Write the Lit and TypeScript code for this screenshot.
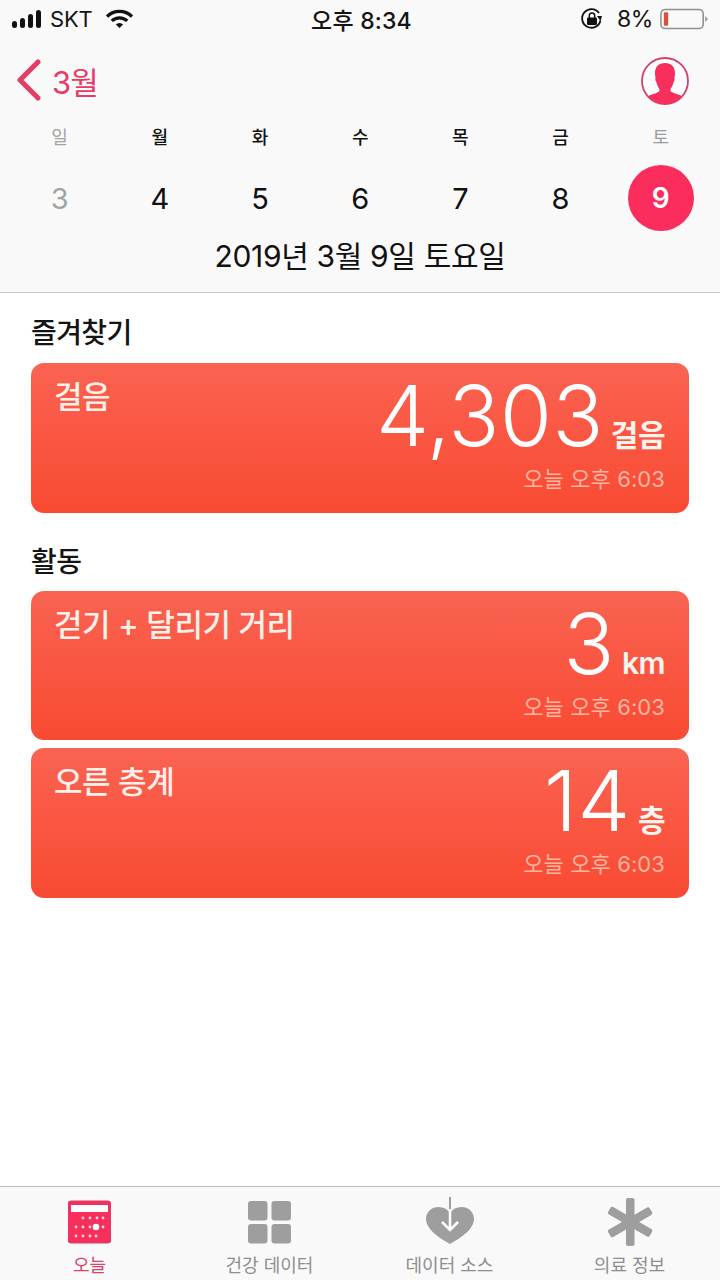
import { LitElement, html, css, svg } from "lit";
import { customElement } from "lit/decorators.js";

const days = [
  ["일", "3", "off"], ["월", "4", ""], ["화", "5", ""], ["수", "6", ""],
  ["목", "7", ""], ["금", "8", ""], ["토", "9", "sel"],
];

const dots = () => {
  const pts = [
    [15, 17], [22, 17], [29, 17], [35, 17],
    [8, 26], [15, 26], [22, 26], [35, 26],
    [8, 35], [15, 35], [22, 35], [28, 35],
  ];
  return pts.map(([x, y]) => svg`<circle cx=${x} cy=${y} r="1.4" fill="#fff" opacity=".8"/>`);
};

@customElement("app-root")
export class AppRoot extends LitElement {
  static styles = css`
    :host { display: block; width: 720px; height: 1280px; background: #fff; font-family: "Inter", "Noto Sans CJK KR", sans-serif; color: #111; }
    .page { display: flex; flex-direction: column; height: 1280px; overflow: hidden; }
    .head { background: #f9f9f9; height: 292px; border-bottom: 1px solid #c9c9c9; box-sizing: content-box; flex: none; }
    .status { height: 38px; display: grid; grid-template-columns: 1fr auto 1fr; align-items: center; padding: 0 12px; color: #141414; }
    .status .l, .status .r { display: flex; align-items: center; }
    .status .r { justify-content: flex-end; }
    .sig { display: flex; align-items: flex-end; gap: 3px; height: 18px; margin-right: 9px; }
    .sig i { width: 5px; background: #111; border-radius: 2.5px; display: block; }
    .sig i:nth-child(1) { height: 7px; } .sig i:nth-child(2) { height: 10px; } .sig i:nth-child(3) { height: 14px; } .sig i:nth-child(4) { height: 18px; }
    .carrier { font-weight: 400; font-size: 22px; letter-spacing: -.2px; margin-right: 13px; }
    .time { font-size: 23px; font-weight: 500; letter-spacing: .2px; margin-left: 3px; }
    .pct { font-size: 23px; margin: 0 7px 0 13px; letter-spacing: -.4px; }
    .nav { height: 86px; display: flex; align-items: center; justify-content: space-between; padding: 0 31px 0 16px; box-sizing: border-box; }
    .back { display: flex; align-items: center; gap: 10px; color: #e63d68; font-size: 31px; letter-spacing: -1px; margin-top: -2px; }
    .week { display: grid; grid-template-columns: repeat(7, 100.2px); padding-left: 9.5px; margin-top: 4px; }
    .day { display: flex; flex-direction: column; align-items: center; }
    .wd { font-size: 18px; line-height: 20px; font-weight: 500; }
    .num { width: 66px; height: 66px; margin-top: 17px; border-radius: 50%; display: flex; align-items: center; justify-content: center; font-size: 29px; font-weight: 400; }
    .off { color: #a3a3a3; }
    .off .wd { font-weight: 400; }
    .sel .wd { color: #9b9b9b; font-weight: 400; }
    .sel .num { background: #fb2d5c; color: #fff; font-size: 28px; font-weight: 600; }
    .date { text-align: center; font-size: 30px; line-height: 36px; margin-top: 7px; letter-spacing: -.35px; }
    .main { flex: 1; padding: 0 31px; }
    h2 { margin: 0; font-size: 28px; font-weight: 500; line-height: 36px; color: #141414; letter-spacing: -.6px; }
    .sec1 { margin-top: 22px; }
    .sec2 { margin-top: 31px; }
    .card { height: 149.5px; margin-top: 12px; border-radius: 13px; box-sizing: border-box; padding: 15px 24px 0 23px; color: #fff;
      background: linear-gradient(180deg, #fa6352 0%, #f94a32 100%); display: flex; justify-content: space-between; }
    .card + .card { margin-top: 8px; }
    .sec2 + .card { margin-top: 11px; }
    .title { font-size: 31px; font-weight: 500; line-height: 38px; letter-spacing: -.4px; color: #fff0ea; }
    .right { display: flex; flex-direction: column; align-items: flex-end; }
    .val { display: flex; align-items: baseline; height: 76px; }
    .big { font-size: 84px; font-weight: 280; line-height: 76px; letter-spacing: .5px; }
    .unit { font-size: 30px; font-weight: 600; margin-left: 7px; letter-spacing: -.5px; color: #fff3ee; }
    .when { font-size: 22px; line-height: 30px; color: #ffb5a0; margin-top: 10px; letter-spacing: .1px; }
    .tabs { height: 94px; flex: none; background: #f9f9f9; border-top: 1px solid #bdbdbd; display: grid; grid-template-columns: 179px 181px 179px 181px; box-sizing: border-box; }
    .tab { display: flex; flex-direction: column; align-items: center; color: #8e8e8e; font-size: 18px; }
    .tab svg { display: block; margin-top: 4px; height: 56px; }
    .tab span { line-height: 24px; margin-top: 7px; }
    .tab.on { color: #d9416a; }
  `;

  card(title: string, big: string, unit: string) {
    return html`<div class="card">
      <div class="title">${title}</div>
      <div class="right">
        <div class="val"><span class="big">${big}</span><span class="unit">${unit}</span></div>
        <div class="when">오늘 오후 6:03</div>
      </div>
    </div>`;
  }

  render() {
    return html`<div class="page">
      <div class="head">
        <div class="status">
          <div class="l">
            <div class="sig"><i></i><i></i><i></i><i></i></div>
            <span class="carrier">SKT</span>
            <svg width="27" height="20" viewBox="0 0 28 20"><path d="M1 7.5a18.5 18.5 0 0 1 26 0" fill="none" stroke="#111" stroke-width="3.4"/><path d="M6 12a11.5 11.5 0 0 1 16 0" fill="none" stroke="#111" stroke-width="3.4"/><path d="M10.2 15.6a5.4 5.4 0 0 1 7.6 0L14 19.4z" fill="#111"/></svg>
          </div>
          <div class="time">오후 8:34</div>
          <div class="r">
            <svg width="24" height="24" viewBox="0 0 24 24"><path d="M20.5 13.5A9.3 9.3 0 1 1 19 6" fill="none" stroke="#111" stroke-width="1.8"/><path d="M17 9l5 0-1.5 5z" fill="#111"/><rect x="7" y="10.5" width="10" height="7.5" rx="1.2" fill="#111"/><path d="M9.3 11V8.6a2.7 2.7 0 0 1 5.4 0V11" fill="none" stroke="#111" stroke-width="1.5"/></svg>
            <span class="pct">8%</span>
            <svg width="48" height="24" viewBox="0 0 50 24"><rect x="1" y="2" width="44" height="20" rx="4.5" fill="none" stroke="#8f8f8f" stroke-width="1.6"/><rect x="4" y="5" width="4.5" height="14" rx="1" fill="#d8503f"/><path d="M47 9l3 3-3 3z" fill="#999"/></svg>
          </div>
        </div>
        <div class="nav">
          <div class="back">
            <svg width="26" height="42" viewBox="0 0 26 42"><path d="M22 3L4 21l18 18" fill="none" stroke="#e63d68" stroke-width="5" stroke-linecap="round" stroke-linejoin="round"/></svg>
            <span>3월</span>
          </div>
          <svg width="48" height="48" viewBox="0 0 48 48"><defs><clipPath id="c"><circle cx="24" cy="24" r="23"/></clipPath></defs><circle cx="24" cy="24" r="23" fill="#fff" stroke="#d4416b" stroke-width="1.8"/><path clip-path="url(#c)" d="M24 6c6.5 0 10 4 10 10 0 2-.2 3.5-.6 5 .6 1 .3 3-.8 4-.6 3-2 5.5-3 7v2c1 2 8 3 13 6v10H5.4V40c5-3 12-4 13-6v-2c-1-1.5-2.4-4-3-7-1.100-1-1.400-3-.8-4-.4-1.500-.6-3-.6-5 0-6 3.500-10 10-10z" fill="#f72f5c"/></svg>
        </div>
        <div class="week">
          ${days.map(([w, n, c]) => html`<div class="day ${c}"><div class="wd">${w}</div><div class="num">${n}</div></div>`)}
        </div>
        <div class="date">2019년 3월 9일 토요일</div>
      </div>
      <div class="main">
        <h2 class="sec1">즐겨찾기</h2>
        ${this.card("걸음", "4,303", "걸음")}
        <h2 class="sec2">활동</h2>
        ${this.card("걷기 + 달리기 거리", "3", "km")}
        ${this.card("오른 층계", "14", "층")}
      </div>
      <div class="tabs">
        <div class="tab on">
          <svg width="43" height="56" viewBox="0 0 43 56"><g transform="translate(0 10)"><rect width="43" height="42" rx="3" fill="#f72f5c" stroke="#d4416b" stroke-width="1"/><rect x="3" y="4" width="37" height="7" fill="#fff"/>${dots()}<circle cx="28" cy="26" r="3.3" fill="#fff"/></g></svg>
          <span>오늘</span>
        </div>
        <div class="tab">
          <svg width="43" height="56" viewBox="0 0 43 56"><g fill="#9e9e9e" transform="translate(0 10)"><rect width="19.5" height="19.5" rx="3"/><rect x="23.5" width="19.5" height="19.5" rx="3"/><rect y="23" width="19.5" height="19.5" rx="3"/><rect x="23.5" y="23" width="19.5" height="19.5" rx="3"/></g></svg>
          <span>건강 데이터</span>
        </div>
        <div class="tab">
          <svg width="50" height="56" viewBox="0 0 50 56"><path d="M25 53C14 47 1 38 1 28 1 20.5 7 16 13.5 16c5 0 9 2 11.5 6 2.5-4 6.5-6 11.500-6C43 16 49 20.5 49 28c0 10-13 19-24 25z" fill="#9e9e9e"/><path d="M25 6v16" stroke="#9e9e9e" stroke-width="2"/><path d="M25 18v20M17 31l8 8 8-8" fill="none" stroke="#fff" stroke-width="2.5"/></svg>
          <span>데이터 소스</span>
        </div>
        <div class="tab">
          <svg width="46" height="56" viewBox="0 0 46 56"><g fill="#9e9e9e"><rect x="19" y="7" width="8.5" height="48" rx="2"/><rect x="19" y="7" width="8.5" height="48" rx="2" transform="rotate(60 23 31)"/><rect x="19" y="7" width="8.5" height="48" rx="2" transform="rotate(-60 23 31)"/></g></svg>
          <span>의료 정보</span>
        </div>
      </div>
    </div>`;
  }
}
